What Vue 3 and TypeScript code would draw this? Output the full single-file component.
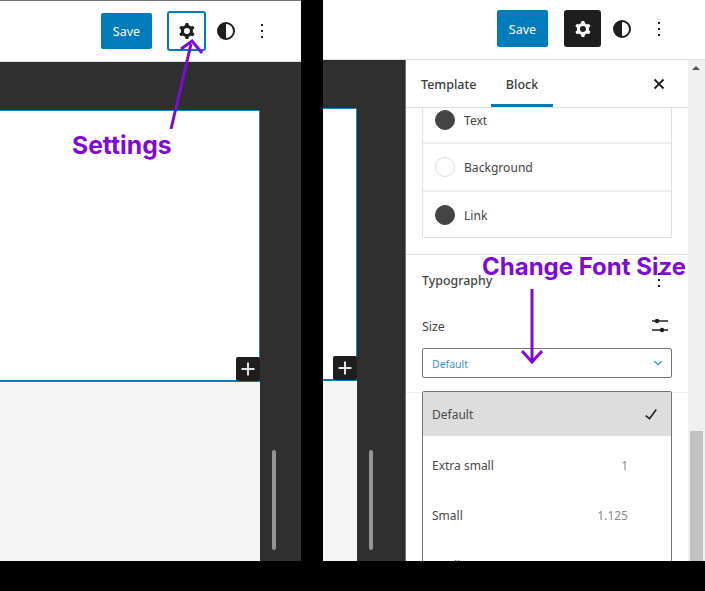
<script setup lang="ts">
interface SizeOption { label: string; value: string; active?: boolean }
interface ColorRow { label: string; dark: boolean }
const colors: ColorRow[] = [
  { label: 'Text', dark: true },
  { label: 'Background', dark: false },
  { label: 'Link', dark: true },
]
const sizes: SizeOption[] = [
  { label: 'Default', value: '', active: true },
  { label: 'Extra small', value: '1' },
  { label: 'Small', value: '1.125' },
  { label: 'Medium', value: '1.25' },
]
const gear = 'M10.289 4.836A1 1 0 0111.275 4h1.306a1 1 0 01.987.836l.244 1.466c.787.26 1.503.679 2.108 1.218l1.393-.522a1 1 0 011.216.437l.653 1.13a1 1 0 01-.23 1.273l-1.148.944a6.025 6.025 0 010 2.435l1.149.946a1 1 0 01.23 1.272l-.653 1.13a1 1 0 01-1.216.437l-1.394-.522c-.605.54-1.32.958-2.108 1.218l-.244 1.466a1 1 0 01-.987.836h-1.306a1 1 0 01-.986-.836l-.244-1.466a5.995 5.995 0 01-2.108-1.218l-1.394.522a1 1 0 01-1.217-.436l-.653-1.131a1 1 0 01.23-1.272l1.149-.946a6.026 6.026 0 010-2.435l-1.148-.944a1 1 0 01-.23-1.272l.653-1.131a1 1 0 011.217-.437l1.393.522a5.994 5.994 0 012.108-1.218l.244-1.466zM14.929 12a3 3 0 11-6 0 3 3 0 016 0z'
</script>

<template>
  <div class="page">
    <section class="panel left">
      <header class="bar">
        <button class="save">Save</button>
        <button class="tool outlined">
          <svg viewBox="0 0 24 24" width="24" height="24"><path :d="gear" fill-rule="evenodd" fill="#1e1e1e" /></svg>
        </button>
        <span class="icon contrast"></span>
        <span class="icon"><i class="dots"></i></span>
      </header>
      <div class="editor">
        <div class="canvas-col">
          <div class="gap-top"></div>
          <div class="canvas">
            <span class="plus"><svg viewBox="0 0 24 24" width="24" height="24"><path d="M12 5.5v13M5.5 12h13" stroke="#e4e4e4" stroke-width="2" /></svg></span>
          </div>
          <div class="below"></div>
        </div>
        <div class="rail"><span class="rail-thumb"></span></div>
      </div>
    </section>

    <section class="panel right">
      <header class="bar">
        <button class="save">Save</button>
        <button class="tool filled">
          <svg viewBox="0 0 24 24" width="24" height="24"><path :d="gear" fill-rule="evenodd" fill="#fff" /></svg>
        </button>
        <span class="icon contrast"></span>
        <span class="icon"><i class="dots"></i></span>
      </header>
      <div class="editor">
        <div class="canvas-col">
          <div class="gap-top"></div>
          <div class="canvas">
            <span class="plus"><svg viewBox="0 0 24 24" width="24" height="24"><path d="M12 5.5v13M5.5 12h13" stroke="#e4e4e4" stroke-width="2" /></svg></span>
          </div>
          <div class="below"></div>
        </div>
        <div class="rail"><span class="rail-thumb"></span></div>
        <aside class="sidebar">
          <div class="side-main">
            <div class="tabs">
              <span class="tab first">Template</span>
              <span class="tab current">Block</span>
              <svg class="close" viewBox="0 0 12 12" width="12" height="12"><path d="M1.5 1.5l9 9M10.5 1.5l-9 9" stroke="#1e1e1e" stroke-width="1.8" fill="none" /></svg>
            </div>
            <div class="colors">
              <div v-for="c in colors" :key="c.label" class="color-row">
                <span class="swatch" :class="{ dark: c.dark }"></span><span class="color-name">{{ c.label }}</span>
              </div>
            </div>
            <div class="typography">
              <div class="typo-head"><span>Typography</span><i class="dots small"></i></div>
              <div class="size-head">
                <span>Size</span>
                <svg viewBox="0 0 24 24" width="24" height="24"><path d="M4 6h16M4 15h16" stroke="#1e1e1e" stroke-width="1.5" /><circle cx="9" cy="6" r="2.2" fill="#1e1e1e" /><circle cx="14" cy="15" r="2.2" fill="#1e1e1e" /></svg>
              </div>
              <div class="select">
                <span class="select-value">Default</span>
                <svg viewBox="0 0 24 24" width="16" height="16"><path d="M6.5 9.5l5.5 5 5.5-5" fill="none" stroke="#3a94c4" stroke-width="2" /></svg>
              </div>
            </div>
            <ul class="menu">
              <li v-for="s in sizes" :key="s.label" class="option" :class="{ active: s.active }">
                <span>{{ s.label }}</span>
                <svg v-if="s.active" class="check" viewBox="0 0 24 24" width="24" height="24"><path d="M16.7 7.1l-6.3 8.5-3.3-2.5-.9 1.2 4.5 3.4L17.9 8z" fill="#1e1e1e" /></svg>
                <span v-else class="val">{{ s.value }}</span>
              </li>
            </ul>
          </div>
          <div class="scrollbar">
            <svg class="up" viewBox="0 0 8 4" width="8" height="4"><path d="M4 0l4 4H0z" fill="#505050" /></svg>
            <span class="thumb"></span>
          </div>
        </aside>
      </div>
    </section>

    <svg class="overlay" viewBox="0 0 705 591" width="705" height="591">
      <g fill="none" stroke="#7e0ada" stroke-width="3">
        <path d="M171 129L191 44" />
        <path d="M181 49L192 41L202 53" />
        <path d="M532 289V362" />
        <path d="M522 351L532 362L542 351" />
      </g>
    </svg>
    <span class="note n1">Settings</span>
    <span class="note n2">Change Font Size</span>
  </div>
</template>

<style>
html, body { margin: 0; background: #000; }
</style>

<style scoped>
.page {
  position: relative;
  width: 705px;
  height: 591px;
  background: #000;
  display: flex;
  gap: 22px;
  overflow: hidden;
  font-family: "Noto Sans", "Open Sans", sans-serif;
  color: #1e1e1e;
}
.panel {
  height: 561px;
  background: #fff;
  display: flex;
  flex-direction: column;
  overflow: hidden;
}
.left { width: 301px; border-top: 1px solid #757575; box-sizing: border-box; }
.right { width: 382px; }
.bar {
  flex: none;
  background: #fff;
  display: flex;
  align-items: center;
  justify-content: flex-end;
  box-sizing: border-box;
  border-bottom: 1px solid #e0e0e0;
}
.left .bar { height: 61px; padding: 0 30px 0 0; }
.right .bar { height: 60px; padding: 0 37px 2px 0; }
.save {
  width: 51px;
  height: 36px;
  border: 0;
  border-radius: 2px;
  background: #007cba;
  color: #fff;
  font: 12.5px "Noto Sans", sans-serif;
  padding: 1px 0 0;
}
.left .save { margin-right: 15px; }
.right .save { height: 37px; margin-right: 16px; }
.tool {
  width: 39px;
  height: 40px;
  padding: 0;
  border-radius: 3px;
  background: #fff;
  display: flex;
  align-items: center;
  justify-content: center;
}
.outlined { border: 2px solid #007cba; }
.filled { width: 37px; height: 37px; border: 0; background: #1e1e1e; }
.icon {
  width: 18px;
  height: 18px;
  display: flex;
  align-items: center;
  justify-content: center;
  box-sizing: border-box;
}
.left .contrast { margin-left: 11px; }
.right .contrast { margin-left: 12px; }
.left .icon:last-child { margin-left: 18px; }
.right .icon:last-child { margin-left: 19px; }
.contrast {
  border: 2px solid #1e1e1e;
  border-radius: 50%;
  background: linear-gradient(90deg, #1e1e1e 50%, #fff 50%);
}
.dots {
  display: block;
  width: 2px;
  height: 2px;
  background: #1e1e1e;
  box-shadow: 0 -6px 0 #1e1e1e, 0 6px 0 #1e1e1e;
}
.editor {
  flex: 1;
  min-height: 0;
  display: flex;
  background: #2f2f2f;
}
.canvas-col {
  display: flex;
  flex-direction: column;
  min-width: 0;
}
.left .canvas-col { width: 260px; }
.right .canvas-col { width: 34px; }
.gap-top { flex: none; height: 48px; background: #2f2f2f; }
.canvas {
  position: relative;
  flex: none;
  box-sizing: border-box;
  background: #fff;
  border-top: 1px solid #1a8ab8;
  border-right: 1px solid #1a8ab8;
  border-bottom: 2px solid #007cba;
}
.left .canvas { height: 272px; }
.right .canvas { height: 273px; }
.below { flex: 1; background: #f5f5f5; }
.plus {
  position: absolute;
  right: -1px;
  bottom: -1px;
  width: 24px;
  height: 24px;
  border-radius: 2px;
  background: #1e1e1e;
  display: block;
}
.plus svg { display: block; }
.rail {
  flex: none;
  display: flex;
  justify-content: center;
  align-items: flex-end;
  padding-bottom: 11px;
  box-sizing: border-box;
}
.left .rail { width: 41px; padding-right: 13px; }
.right .rail { width: 49px; padding-right: 20px; border-right: 1px solid #757575; }
.rail-thumb {
  display: block;
  width: 4px;
  height: 100px;
  border-radius: 2px;
  background: #949494;
}
.sidebar {
  flex: 1;
  min-width: 0;
  display: flex;
  background: #fff;
}
.side-main { width: 282px; flex: none; overflow: hidden; }
.tabs {
  height: 48px;
  box-sizing: border-box;
  border-bottom: 1px solid #e0e0e0;
  display: flex;
  position: relative;
  font-size: 12.5px;
}
.tab {
  height: 47px;
  display: flex;
  align-items: center;
  box-sizing: border-box;
  font-weight: 500;
  color: #3c3c3c;
  padding-top: 1px;
}
.tab.first { width: 85px; padding-left: 15px; }
.tab.current { width: 62px; justify-content: center; box-shadow: inset 0 -3px 0 #007cba; }
.close { position: absolute; right: 23px; top: 18px; }
.colors {
  margin: 0 16px;
  height: 130px;
  box-sizing: border-box;
  border: 1px solid #e0e0e0;
  border-top: 0;
  border-radius: 0 0 2px 2px;
  font-size: 12.1px;
  color: #444;
}
.color-row {
  height: 47.5px;
  display: flex;
  align-items: center;
  gap: 8px;
  padding-left: 12px;
  box-sizing: border-box;
  border-bottom: 2px solid #eee;
}
.color-row:first-child { height: 36px; padding-bottom: 10px; }
.color-row:last-child { border-bottom: 0; height: 46px; }
.color-name { padding-top: 1px; margin-left: 1px; }
.swatch {
  width: 20px;
  height: 20px;
  border-radius: 50%;
  border: 1px solid #ddd;
  box-sizing: border-box;
  background: #fff;
}
.swatch.dark { background: #444; border-color: #444; }
.typography {
  margin-top: 16px;
  height: 139px;
  box-sizing: border-box;
  border-top: 1px solid #e0e0e0;
  border-bottom: 1px solid #eee;
  padding: 0 16px;
  font-size: 12.4px;
  color: #444;
}
.typo-head {
  height: 50px;
  display: flex;
  align-items: center;
  justify-content: space-between;
  padding-right: 12px;
  font-weight: 500;
  box-sizing: border-box;
}
.size-head {
  height: 43px;
  display: flex;
  align-items: center;
  justify-content: space-between;
}
.select {
  height: 30px;
  box-sizing: border-box;
  border: 1px solid #757575;
  border-radius: 2px;
  display: flex;
  align-items: center;
  justify-content: space-between;
  padding: 0 5px 0 9px;
  font-size: 10.5px;
  color: #3a94c4;
}
.select-value { padding-top: 1px; }
.menu {
  list-style: none;
  margin: -2px 16px 0;
  padding: 0;
  border: 1px solid #757575;
  border-radius: 2px 2px 0 0;
  font-size: 12px;
  color: #4a4a4a;
  background: #fff;
  position: relative;
}
.option {
  height: 50px;
  display: flex;
  align-items: center;
  justify-content: space-between;
  padding: 0 43px 0 9px;
}
.option.active {
  height: 44px;
  margin-bottom: 4px;
  background: #ddd;
  padding-right: 8px;
}
.val { color: #8a8a8a; }
.scrollbar {
  flex: 1;
  background: #f0f0f0;
  position: relative;
}
.up { position: absolute; left: 4px; top: 6px; }
.thumb {
  position: absolute;
  left: 2px;
  right: 2px;
  top: 371px;
  height: 130px;
  background: #c1c1c1;
}
.overlay { position: absolute; inset: 0; pointer-events: none; }
.note {
  position: absolute;
  font-family: Inter, sans-serif;
  font-weight: 700;
  color: #7e0ada;
  white-space: nowrap;
}
.n1 { left: 72px; top: 130px; font-size: 24.7px; line-height: 30px; }
.n2 { left: 482px; top: 252px; font-size: 24px; line-height: 30px; }
</style>
